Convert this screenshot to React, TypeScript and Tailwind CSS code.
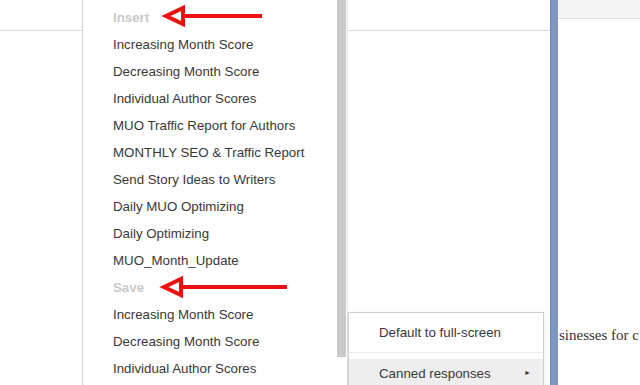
import React from "react";

const insertItems = [
  "Increasing Month Score",
  "Decreasing Month Score",
  "Individual Author Scores",
  "MUO Traffic Report for Authors",
  "MONTHLY SEO & Traffic Report",
  "Send Story Ideas to Writers",
  "Daily MUO Optimizing",
  "Daily Optimizing",
  "MUO_Month_Update",
];
const saveItems = [
  "Increasing Month Score",
  "Decreasing Month Score",
  "Individual Author Scores",
];

function Row({ text, header }: { text: string; header?: boolean }) {
  return (
    <div
      className={
        "h-[27px] flex items-center pl-[30px] text-[13.3px] whitespace-nowrap " +
        (header ? "font-bold text-[#c9c9c9]" : "text-[#383838]")
      }
    >
      {text}
    </div>
  );
}

function Arrow({ x1, x2, y }: { x1: number; x2: number; y: number }) {
  const back = x1 + 20;
  return (
    <svg
      className="absolute top-0 left-0 pointer-events-none"
      width={640}
      height={385}
    >
      <line x1={back} y1={y} x2={x2} y2={y} stroke="#ee1010" strokeWidth={4} />
      <polygon
        points={`${x1 + 2},${y} ${back - 1},${y - 8} ${back - 1},${y + 8}`}
        fill="#ffffff"
        stroke="#ee1010"
        strokeWidth={4}
        strokeLinejoin="miter"
      />
    </svg>
  );
}

export default function App() {
  return (
    <div
      className="relative w-[640px] h-[385px] overflow-hidden bg-white"
      style={{ fontFamily: '"Liberation Sans", Arial, sans-serif' }}
    >
      {/* background page */}
      <div className="flex h-full">
        <div className="w-[550px] h-full">
          <div className="h-[31px] border-b border-[#dcdcdc]" />
        </div>
        <div className="w-[8px] h-full bg-[#7e96c2] border-l border-[#6f87b4]" />
        <div className="flex-1 h-full flex flex-col">
          <div className="h-[19px] bg-[#f3f3f3] border-b border-[#dedede]" />
          <div
            className="mt-[307px] pl-[1px] text-[15px] text-[#333] whitespace-nowrap leading-[18px]"
            style={{ fontFamily: '"Liberation Serif", "Times New Roman", serif' }}
          >
            sinesses for c
          </div>
        </div>
      </div>

      {/* templates menu */}
      <div className="absolute left-[82px] top-0 w-[266px] h-full flex bg-white">
        <div className="w-[256px] h-full border-l border-[#d4d4d4] pt-[4px]">
          <Row text="Insert" header />
          {insertItems.map((t, i) => (
            <Row key={"i" + i} text={t} />
          ))}
          <Row text="Save" header />
          {saveItems.map((t, i) => (
            <Row key={"s" + i} text={t} />
          ))}
        </div>
        <div className="w-[9px] h-[357px] bg-[#c9c9c9]" />
        <div className="w-[1px] h-full ml-[1px] bg-[#e6e6e6]" />
      </div>

      {/* options menu */}
      <div className="absolute left-[348px] top-[312px] w-[196px] h-[80px] bg-white border border-[#cfcfcf] shadow-[0_1px_3px_rgba(0,0,0,0.1)]">
        <div className="h-[39px] flex items-center pl-[30px] text-[13.3px] text-[#383838]">
          Default to full-screen
        </div>
        <div className="h-[1px] bg-[#ebebeb]" />
        <div className="h-[6px]" />
        <div className="h-[29px] bg-[#eeeeee] flex items-center pl-[30px] pr-[12px] text-[13.3px] text-[#383838]">
          <span className="flex-1">Canned responses</span>
          <span className="text-[7px] text-[#333]">►</span>
        </div>
      </div>

      <Arrow x1={164} x2={262} y={16} />
      <Arrow x1={162} x2={287} y={287} />
    </div>
  );
}
